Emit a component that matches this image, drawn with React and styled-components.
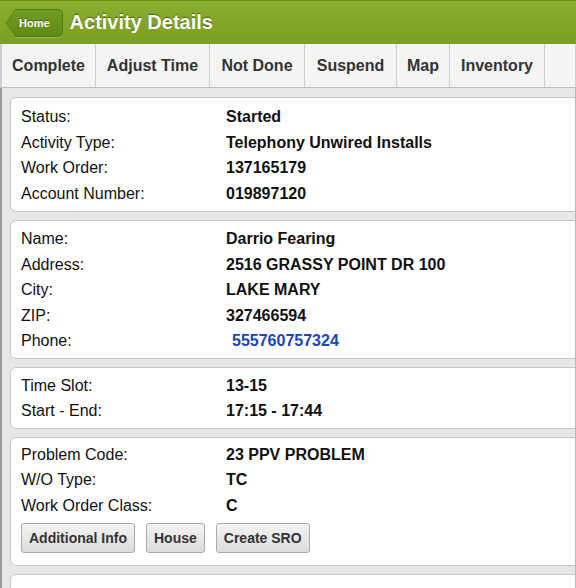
import styled, { createGlobalStyle } from "styled-components";

const GlobalStyle = createGlobalStyle`
  html, body {
    margin: 0;
    padding: 0;
    height: 100%;
    overflow: hidden;
  }
  body {
    font-family: "Liberation Sans", Arial, Helvetica, sans-serif;
    background: #e7e7e7;
  }
`;

const tabs = [
  { name: "Complete", width: 96 },
  { name: "Adjust Time", width: 114 },
  { name: "Not Done", width: 95 },
  { name: "Suspend", width: 92 },
  { name: "Map", width: 53 },
  { name: "Inventory", width: 95 },
];

const sections = [
  {
    pad: "6px 10px 5px",
    rows: [
      { label: "Status:", value: "Started" },
      { label: "Activity Type:", value: "Telephony Unwired Installs" },
      { label: "Work Order:", value: "137165179" },
      { label: "Account Number:", value: "019897120" },
    ],
  },
  {
    pad: "5px 10px 4px",
    rows: [
      { label: "Name:", value: "Darrio Fearing" },
      { label: "Address:", value: "2516 GRASSY POINT DR 100" },
      { label: "City:", value: "LAKE MARY" },
      { label: "ZIP:", value: "327466594" },
      { label: "Phone:", value: "555760757324", link: true },
    ],
  },
  {
    pad: "5px 10px 4px",
    rows: [
      { label: "Time Slot:", value: "13-15" },
      { label: "Start - End:", value: "17:15 - 17:44" },
    ],
  },
];

const problem = [
  { label: "Problem Code:", value: "23 PPV PROBLEM" },
  { label: "W/O Type:", value: "TC" },
  { label: "Work Order Class:", value: "C" },
];

const App = () => {
  return (
    <>
      <GlobalStyle />
      <Page>
        <Header>
          <HomeButton>
            <span>Home</span>
          </HomeButton>
          <Title>Activity Details</Title>
        </Header>
        <TabBar>
          {tabs.map((t) => (
            <Tab key={t.name} $width={t.width}>
              {t.name}
            </Tab>
          ))}
        </TabBar>
        <Content>
          {sections.map((s, i) => (
            <Card key={i} $pad={s.pad}>
              {s.rows.map((r) => (
                <Row key={r.label}>
                  <Label>{r.label}</Label>
                  <Value $link={r.link}>{r.value}</Value>
                </Row>
              ))}
            </Card>
          ))}
          <Card $pad="4px 10px 5px">
            {problem.map((r) => (
              <Row key={r.label}>
                <Label>{r.label}</Label>
                <Value>{r.value}</Value>
              </Row>
            ))}
            <Buttons>
              <Button>Additional Info</Button>
              <Button>House</Button>
              <Button>Create SRO</Button>
            </Buttons>
          </Card>
          <Card $empty />
        </Content>
      </Page>
    </>
  );
};
export default App;

const Page = styled.div`
  width: 576px;
  height: 588px;
  overflow: hidden;
  display: flex;
  flex-direction: column;
  background: #e7e7e7;
`;

const Header = styled.header`
  height: 44px;
  flex-shrink: 0;
  display: flex;
  align-items: center;
  box-sizing: border-box;
  border-top: 1px solid #6f8f1f;
  background: linear-gradient(#8aae2e, #7a9f22);
`;

const HomeButton = styled.div`
  position: relative;
  margin-left: 15px;
  height: 28px;
  margin-top: 1px;
  padding: 0 12px 0 4px;
  display: flex;
  align-items: center;
  box-sizing: border-box;
  border: 1px solid #557a14;
  border-left: none;
  border-radius: 0 5px 5px 0;
  background: linear-gradient(#739d22, #5d8a16);
  box-shadow: 0 1px 0 rgba(255, 255, 255, 0.25);
  z-index: 0;
  &::before {
    content: "";
    position: absolute;
    left: 0;
    top: 50%;
    width: 19px;
    height: 19px;
    box-sizing: border-box;
    border-left: 1px solid #557a14;
    border-bottom: 1px solid #557a14;
    background: linear-gradient(135deg, #739d22, #5d8a16);
    transform: translate(-50%, -50%) scaleX(0.68) rotate(45deg);
    z-index: -1;
  }
  span {
    position: relative;
    color: #fff;
    font-size: 11px;
    font-weight: bold;
    text-shadow: 0 -1px 0 rgba(0, 0, 0, 0.4);
  }
`;

const Title = styled.h1`
  margin: 0 0 0 7px;
  font-size: 20px;
  font-weight: bold;
  color: #fff;
  text-shadow: 0 -1px 1px rgba(0, 0, 0, 0.45);
`;

const TabBar = styled.nav`
  height: 44px;
  flex-shrink: 0;
  display: flex;
  box-sizing: border-box;
  background: #f4f4f4;
  border-bottom: 1px solid #bdbdbd;
  border-left: 2px solid #cfcfcf;
  border-right: 1px solid #d0d0d0;
`;

const Tab = styled.div`
  width: ${(p) => p.$width}px;
  flex-shrink: 0;
  box-sizing: border-box;
  display: flex;
  align-items: center;
  justify-content: center;
  border-right: 1px solid #cccccc;
  font-size: 16px;
  font-weight: bold;
  color: #333;
  white-space: nowrap;
  &:first-child {
    width: ${(p) => p.$width - 2}px;
  }
`;

const Content = styled.main`
  flex: 1;
  display: flex;
  flex-direction: column;
  gap: 8px;
  padding: 9px 0 0 8px;
  box-sizing: border-box;
  border-left: 2px solid #9a9a9a;
  border-right: 1px solid #b8b8b8;
  overflow: hidden;
`;

const Card = styled.section`
  flex-shrink: 0;
  box-sizing: border-box;
  width: 570px;
  padding: ${(p) => p.$pad || "5px 10px"};
  background: #fff;
  border: 1px solid #c6c6c6;
  border-radius: 6px;
  min-height: ${(p) => (p.$empty ? "40px" : "0")};
`;

const Row = styled.div`
  display: grid;
  grid-template-columns: 205px 1fr;
  line-height: 25.5px;
  font-size: 16px;
  color: #111;
  white-space: nowrap;
`;

const Label = styled.span``;

const Value = styled.span`
  font-weight: bold;
  color: ${(p) => (p.$link ? "#1c46b6" : "#111")};
  padding-left: ${(p) => (p.$link ? "6px" : "0")};
`;

const Buttons = styled.div`
  display: flex;
  gap: 11px;
  margin: 5px 0 7px;
`;

const Button = styled.button`
  height: 30px;
  padding: 0 7px;
  font-family: "Liberation Sans", Arial, sans-serif;
  font-size: 14px;
  font-weight: bold;
  color: #333;
  background: linear-gradient(#f3f3f3, #dcdcdc);
  border: 1px solid #ababab;
  border-radius: 3px;
`;
